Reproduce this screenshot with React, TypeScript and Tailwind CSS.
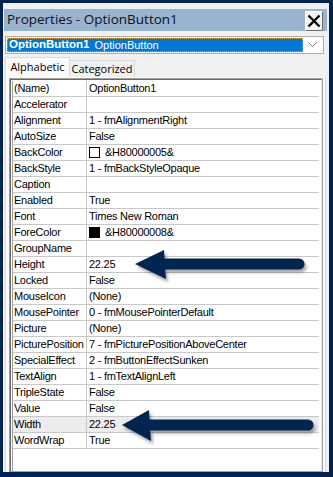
const rows: { name: string; value: string; swatch?: "white" | "black"; hl?: boolean }[] = [
  { name: "(Name)", value: "OptionButton1" },
  { name: "Accelerator", value: "" },
  { name: "Alignment", value: "1 - fmAlignmentRight" },
  { name: "AutoSize", value: "False" },
  { name: "BackColor", value: "&H80000005&", swatch: "white" },
  { name: "BackStyle", value: "1 - fmBackStyleOpaque" },
  { name: "Caption", value: "" },
  { name: "Enabled", value: "True" },
  { name: "Font", value: "Times New Roman" },
  { name: "ForeColor", value: "&H80000008&", swatch: "black" },
  { name: "GroupName", value: "" },
  { name: "Height", value: "22.25" },
  { name: "Locked", value: "False" },
  { name: "MouseIcon", value: "(None)" },
  { name: "MousePointer", value: "0 - fmMousePointerDefault" },
  { name: "Picture", value: "(None)" },
  { name: "PicturePosition", value: "7 - fmPicturePositionAboveCenter" },
  { name: "SpecialEffect", value: "2 - fmButtonEffectSunken" },
  { name: "TextAlign", value: "1 - fmTextAlignLeft" },
  { name: "TripleState", value: "False" },
  { name: "Value", value: "False" },
  { name: "Width", value: "22.25", hl: true },
  { name: "WordWrap", value: "True" },
];

function Arrow({ tipX, y, headX, headTop, headBottom, tailX, thick }: { tipX: number; y: number; headX: number; headTop: number; headBottom: number; tailX: number; thick: number }) {
  return (
    <g>
      <line x1={headX - 2} y1={y} x2={tailX} y2={y} stroke="#06264f" strokeWidth={thick} strokeLinecap="round" />
      <polygon points={`${tipX},${y} ${headX},${headTop} ${headX + 2},${headBottom}`} fill="#06264f" />
    </g>
  );
}

export default function App() {
  return (
    <div
      className="relative w-[333px] h-[477px] bg-[#012350] pt-[3px] pl-[3px] pr-[4px] pb-[5px] overflow-hidden"
      style={{ fontFamily: '"Liberation Sans", Arial, sans-serif' }}
    >
      <div className="h-full bg-[#f0f0f0] flex flex-col">
        {/* Title bar */}
        <div className="mt-[6px] ml-[1px] mr-[2px] h-[22px] bg-[#99b4d1] flex items-center justify-between pl-[3px] pr-[4px]">
          <span className="text-[13.5px] text-[#111] leading-none" style={{ fontFamily: '"Open Sans", sans-serif' }}>
            Properties - OptionButton1
          </span>
          <div className="mt-[2px] w-[18px] h-[20px] bg-[#f4f4f4] border border-t-white border-l-white border-r-[#6d6d6d] border-b-[#6d6d6d] flex items-center justify-center">
            <svg width="14" height="14" viewBox="0 0 14 14">
              <path d="M1.5 1.5 L12.5 12.5 M12.5 1.5 L1.5 12.5" stroke="#000" strokeWidth="2.4" />
            </svg>
          </div>
        </div>

        {/* Object dropdown */}
        <div className="mt-[5px] ml-[2px] mr-[5px] h-[18px] bg-white border border-[#acacac] flex items-center p-[1px]">
          <div className="flex-1 h-full bg-[#0078d7] border border-dotted border-[#f0a030] flex items-center pl-[1px] text-white leading-none gap-[5px]">
            <span className="font-bold text-[11.5px]">OptionButton1</span>
            <span className="text-[11px]">OptionButton</span>
          </div>
          <div className="w-[19px] flex justify-center">
            <svg width="9" height="6" viewBox="0 0 9 6">
              <path d="M0.5 0.5 L4.5 4.5 L8.5 0.5" stroke="#7a7a7a" strokeWidth="1" fill="none" />
            </svg>
          </div>
        </div>

        {/* Tabs */}
        <div className="mt-[3px] ml-[2px] flex items-end h-[20px] text-[11px] text-black" style={{ fontFamily: '"Open Sans", sans-serif' }}>
          <div className="h-[20px] w-[65px] bg-[#fbfbfb] border border-b-0 border-[#d9d9d9] flex items-center justify-center">
            Alphabetic
          </div>
          <div className="h-[17px] w-[65px] bg-[#f0f0f0] border border-l-0 border-b-0 border-[#d9d9d9] flex items-center justify-center">
            Categorized
          </div>
        </div>

        {/* Tab page */}
        <div className="flex-1 ml-[2px] mr-[3px] bg-[#fbfbfb] border-l border-r border-[#d9d9d9] pl-[3px] pr-[2px] pt-[1px] flex flex-col">
          <div className="flex-1 border border-[#a0a0a0] bg-white">
            <div className="h-full border border-[#696969] border-r-[#e3e3e3] border-b-0 pl-[1px] pr-[2px] pt-[1px]">
              <div className="h-full border-l border-[#a0a0a0]">
                {rows.map((r) => (
                  <div
                    key={r.name}
                    className={`flex h-[16px] border-b border-[#c8c8c8] text-[11px] tracking-[-0.25px] text-black leading-none ${r.hl ? "bg-[#ececec]" : "bg-white"}`}
                  >
                    <div className="w-[74px] border-r border-[#c8c8c8] flex items-center pl-[1px] whitespace-nowrap overflow-hidden">
                      {r.name}
                    </div>
                    <div className="flex-1 flex items-center pl-[2px] whitespace-nowrap overflow-hidden">
                      {r.swatch && (
                        <span
                          className={`w-[11px] h-[11px] border border-black mr-[5px] ${r.swatch === "black" ? "bg-black" : "bg-white"}`}
                        />
                      )}
                      {r.value}
                    </div>
                  </div>
                ))}
              </div>
            </div>
          </div>
        </div>
      </div>

      {/* Callout arrows */}
      <svg className="absolute inset-0 pointer-events-none" width="333" height="477">
        <defs>
          <filter id="sh" x="-10%" y="-50%" width="130%" height="200%">
            <feDropShadow dx="2" dy="3" stdDeviation="1.5" floodColor="#000" floodOpacity="0.35" />
          </filter>
        </defs>
        <g filter="url(#sh)">
          <Arrow tipX={135} y={264} headX={164} headTop={250} headBottom={279} tailX={299} thick={11} />
          <Arrow tipX={122} y={425} headX={149} headTop={410} headBottom={441} tailX={308} thick={11} />
        </g>
      </svg>
    </div>
  );
}
